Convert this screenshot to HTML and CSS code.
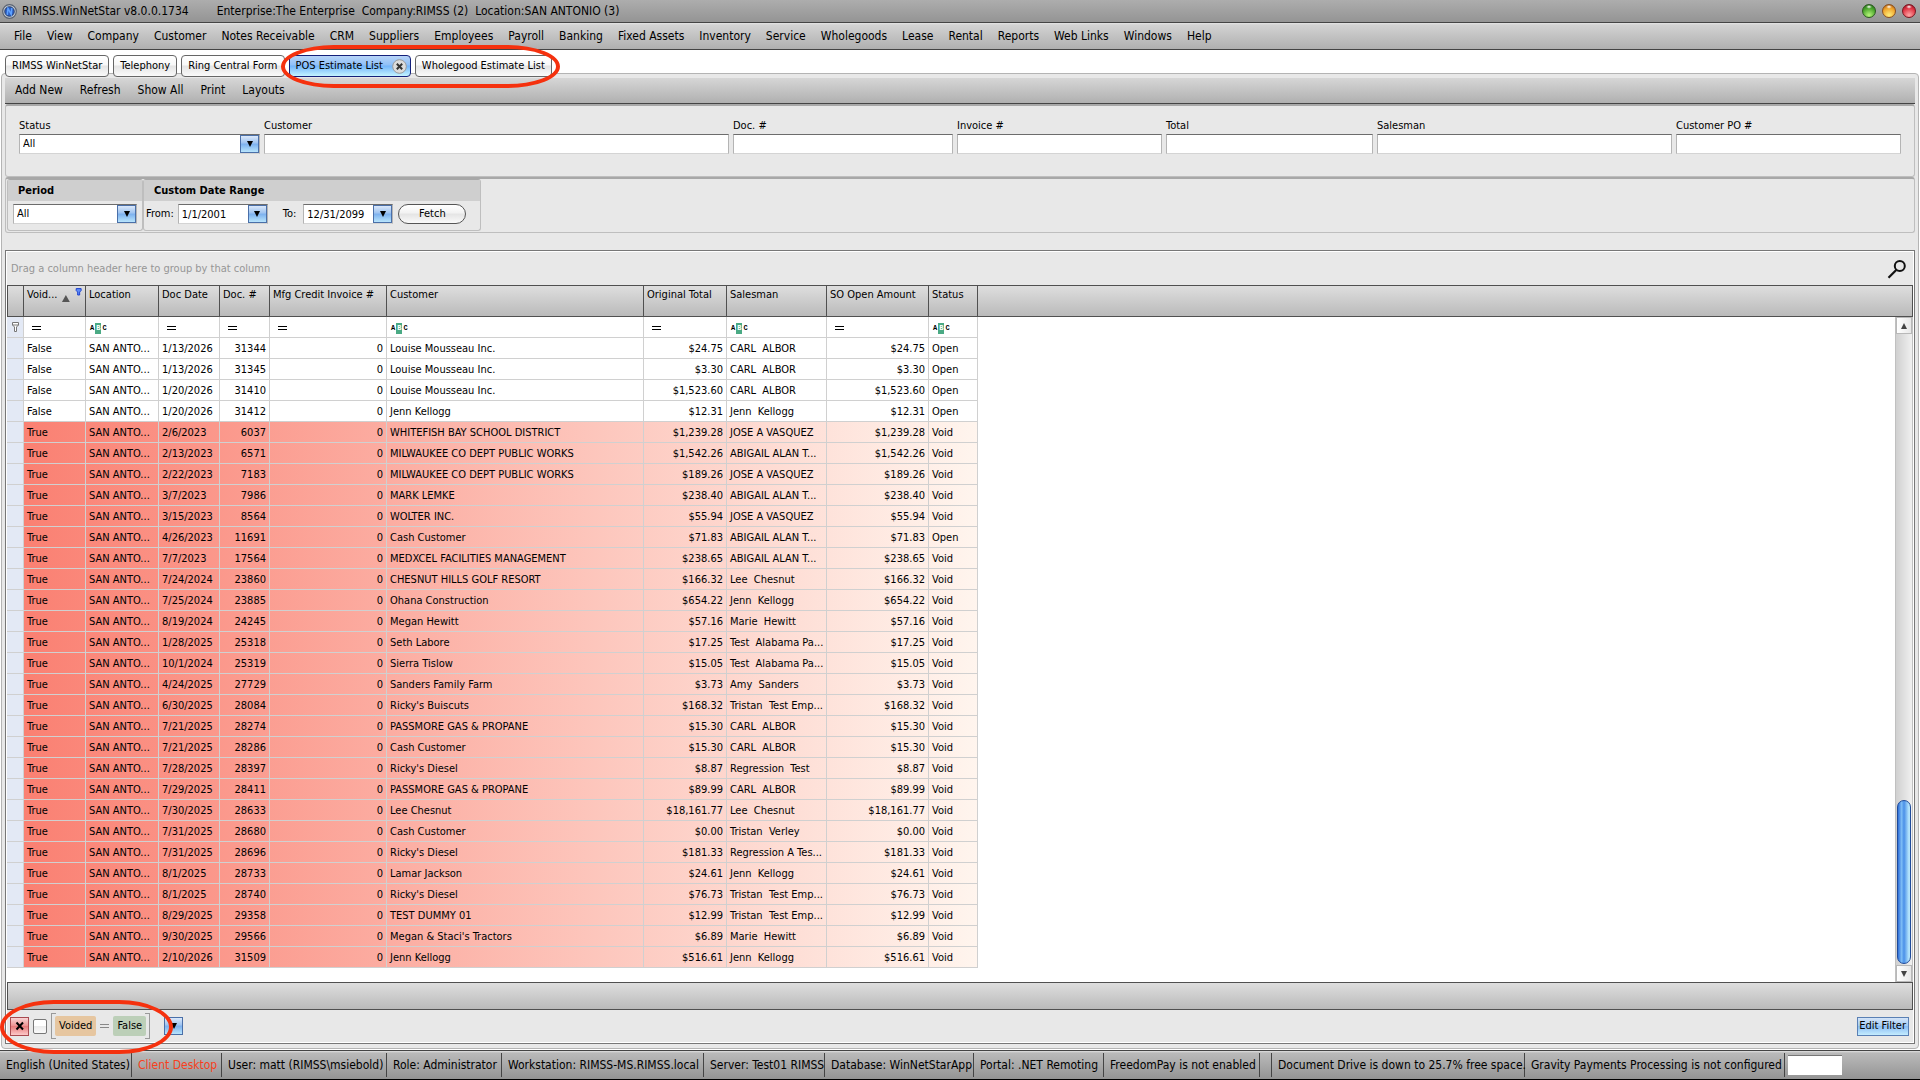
FILE: index.html
```html
<!DOCTYPE html>
<html lang="en">
<head>
<meta charset="utf-8">
<title>RIMSS.WinNetStar</title>
<link rel="stylesheet" href="styles.css">
</head>
<body>
<header class="titlebar">
  <svg class="app-icon" width="15" height="15" viewBox="0 0 15 15" aria-hidden="true">
    <circle cx="7.5" cy="7.5" r="6.8" fill="#c3cbd8" stroke="#5a6270" stroke-width="1.2"/>
    <circle cx="7.5" cy="7.5" r="4.8" fill="#2d5fc4" stroke="#20304e" stroke-width=".8"/>
    <path d="M5.3 10.8 6 4.4 9.2 10.4 9.8 4" fill="none" stroke="#5fa2ff" stroke-width="1.5"/>
  </svg>
  <span class="app-name">RIMSS.WinNetStar v8.0.0.1734</span>
  <span class="app-info">Enterprise:The Enterprise&nbsp; Company:RIMSS (2)&nbsp; Location:SAN ANTONIO (3)</span>
  <div class="window-buttons">
    <button class="orb orb-green" aria-label="Minimize"></button>
    <button class="orb orb-orange" aria-label="Maximize"></button>
    <button class="orb orb-red" aria-label="Close"></button>
  </div>
</header>
<nav class="menubar">
  <a href="#">File</a><a href="#">View</a><a href="#">Company</a><a href="#">Customer</a><a href="#">Notes Receivable</a><a href="#">CRM</a><a href="#">Suppliers</a><a href="#">Employees</a><a href="#">Payroll</a><a href="#">Banking</a><a href="#">Fixed Assets</a><a href="#">Inventory</a><a href="#">Service</a><a href="#">Wholegoods</a><a href="#">Lease</a><a href="#">Rental</a><a href="#">Reports</a><a href="#">Web Links</a><a href="#">Windows</a><a href="#">Help</a>
</nav>
<div class="tabs">
  <button class="tab">RIMSS WinNetStar</button>
  <button class="tab">Telephony</button>
  <button class="tab">Ring Central Form</button>
  <button class="tab tab-active">POS Estimate List
    <svg width="15" height="15" viewBox="0 0 15 15" aria-hidden="true"><circle cx="7.5" cy="7.5" r="6.8" fill="#dcdcdc" stroke="#9a9a9a"/><path d="M4.8 4.8l5.4 5.4M10.2 4.8l-5.4 5.4" stroke="#333" stroke-width="2"/></svg>
  </button>
  <button class="tab">Wholegood Estimate List</button>
</div>
<main class="page">
  <div class="toolbar">
    <button>Add New</button><button>Refresh</button><button>Show All</button><button>Print</button><button>Layouts</button>
  </div>
  <section class="box search-fields">
    <div class="field"><label for="status">Status</label><div class="combo"><select id="status"><option>All</option></select><span class="drop"></span></div></div>
    <div class="field"><label for="customer">Customer</label><input id="customer" type="text"></div>
    <div class="field"><label for="doc">Doc. #</label><input id="doc" type="text"></div>
    <div class="field"><label for="invoice">Invoice #</label><input id="invoice" type="text"></div>
    <div class="field"><label for="total">Total</label><input id="total" type="text"></div>
    <div class="field"><label for="salesman">Salesman</label><input id="salesman" type="text"></div>
    <div class="field"><label for="po">Customer PO #</label><input id="po" type="text"></div>
  </section>
  <section class="box period-row">
    <div class="group group-period">
      <h2 id="period-title">Period</h2>
      <div class="group-body"><div class="combo"><select aria-labelledby="period-title"><option>All</option></select><span class="drop"></span></div></div>
    </div>
    <div class="group group-range">
      <h2>Custom Date Range</h2>
      <div class="group-body">
        <label for="from">From:</label>
        <div class="combo date"><input id="from" type="text" value="1/1/2001"><button class="drop" aria-label="Open calendar"></button></div>
        <label class="to" for="to">To:</label>
        <div class="combo date"><input id="to" type="text" value="12/31/2099"><button class="drop" aria-label="Open calendar"></button></div>
        <button class="fetch">Fetch</button>
      </div>
    </div>
  </section>
  <section class="grid">
    <div class="group-by">
      <span>Drag a column header here to group by that column</span>
      <svg width="20" height="20" viewBox="0 0 20 20" aria-hidden="true"><circle cx="12.8" cy="7" r="5" fill="none" stroke="#111" stroke-width="2"/><path d="M9.2 11 1.5 18.7" stroke="#111" stroke-width="2.2"/></svg>
    </div>
    <div class="grid-body">
      <table>
        <colgroup><col class="c-mark"><col class="c-void"><col class="c-loc"><col class="c-date"><col class="c-doc"><col class="c-mfg"><col class="c-cust"><col class="c-orig"><col class="c-sales"><col class="c-so"><col class="c-status"><col></colgroup>
        <thead>
          <tr class="head"><th></th><th><span class="sorted">Void...<svg width="28" height="16" viewBox="0 0 28 16" aria-hidden="true"><path d="M5 15 9 8l4 7z" fill="#555"/><path d="M19.500 1.500h5v2l-1.500 1.500v3h-2v-3l-1.500-1.500z" fill="#5f8cf5" stroke="#1a3fd0"/></svg></span></th><th>Location</th><th>Doc Date</th><th>Doc. #</th><th>Mfg Credit Invoice #</th><th>Customer</th><th>Original Total</th><th>Salesman</th><th>SO Open Amount</th><th>Status</th><th></th></tr>
        </thead>
        <tbody>
          <tr class="filter"><td><svg class="funnel" width="9" height="12" viewBox="0 0 9 12" aria-hidden="true"><path d="M1.500 1.500h6v2.500l-2 2v4.500h-2v-4.500l-2-2zM1.500 4h6" fill="#fff" stroke="#777"/></svg></td><td><i class="eq"></i></td><td><span class="abc">A<b>B</b>C</span></td><td><i class="eq"></i></td><td><i class="eq"></i></td><td><i class="eq"></i></td><td><span class="abc">A<b>B</b>C</span></td><td><i class="eq"></i></td><td><span class="abc">A<b>B</b>C</span></td><td><i class="eq"></i></td><td><span class="abc">A<b>B</b>C</span></td><td></td></tr>
          <tr><td></td><td>False</td><td>SAN ANTO...</td><td>1/13/2026</td><td>31344</td><td>0</td><td>Louise Mousseau Inc.</td><td>$24.75</td><td>CARL  ALBOR</td><td>$24.75</td><td>Open</td><td></td></tr>
          <tr><td></td><td>False</td><td>SAN ANTO...</td><td>1/13/2026</td><td>31345</td><td>0</td><td>Louise Mousseau Inc.</td><td>$3.30</td><td>CARL  ALBOR</td><td>$3.30</td><td>Open</td><td></td></tr>
          <tr><td></td><td>False</td><td>SAN ANTO...</td><td>1/20/2026</td><td>31410</td><td>0</td><td>Louise Mousseau Inc.</td><td>$1,523.60</td><td>CARL  ALBOR</td><td>$1,523.60</td><td>Open</td><td></td></tr>
          <tr><td></td><td>False</td><td>SAN ANTO...</td><td>1/20/2026</td><td>31412</td><td>0</td><td>Jenn Kellogg</td><td>$12.31</td><td>Jenn  Kellogg</td><td>$12.31</td><td>Open</td><td></td></tr>
          <tr class="void"><td></td><td>True</td><td>SAN ANTO...</td><td>2/6/2023</td><td>6037</td><td>0</td><td>WHITEFISH BAY SCHOOL DISTRICT</td><td>$1,239.28</td><td>JOSE A VASQUEZ</td><td>$1,239.28</td><td>Void</td><td></td></tr>
          <tr class="void"><td></td><td>True</td><td>SAN ANTO...</td><td>2/13/2023</td><td>6571</td><td>0</td><td>MILWAUKEE CO DEPT PUBLIC WORKS</td><td>$1,542.26</td><td>ABIGAIL ALAN T...</td><td>$1,542.26</td><td>Void</td><td></td></tr>
          <tr class="void"><td></td><td>True</td><td>SAN ANTO...</td><td>2/22/2023</td><td>7183</td><td>0</td><td>MILWAUKEE CO DEPT PUBLIC WORKS</td><td>$189.26</td><td>JOSE A VASQUEZ</td><td>$189.26</td><td>Void</td><td></td></tr>
          <tr class="void"><td></td><td>True</td><td>SAN ANTO...</td><td>3/7/2023</td><td>7986</td><td>0</td><td>MARK LEMKE</td><td>$238.40</td><td>ABIGAIL ALAN T...</td><td>$238.40</td><td>Void</td><td></td></tr>
          <tr class="void"><td></td><td>True</td><td>SAN ANTO...</td><td>3/15/2023</td><td>8564</td><td>0</td><td>WOLTER INC.</td><td>$55.94</td><td>JOSE A VASQUEZ</td><td>$55.94</td><td>Void</td><td></td></tr>
          <tr class="void"><td></td><td>True</td><td>SAN ANTO...</td><td>4/26/2023</td><td>11691</td><td>0</td><td>Cash Customer</td><td>$71.83</td><td>ABIGAIL ALAN T...</td><td>$71.83</td><td>Open</td><td></td></tr>
          <tr class="void"><td></td><td>True</td><td>SAN ANTO...</td><td>7/7/2023</td><td>17564</td><td>0</td><td>MEDXCEL FACILITIES MANAGEMENT</td><td>$238.65</td><td>ABIGAIL ALAN T...</td><td>$238.65</td><td>Void</td><td></td></tr>
          <tr class="void"><td></td><td>True</td><td>SAN ANTO...</td><td>7/24/2024</td><td>23860</td><td>0</td><td>CHESNUT HILLS GOLF RESORT</td><td>$166.32</td><td>Lee  Chesnut</td><td>$166.32</td><td>Void</td><td></td></tr>
          <tr class="void"><td></td><td>True</td><td>SAN ANTO...</td><td>7/25/2024</td><td>23885</td><td>0</td><td>Ohana Construction</td><td>$654.22</td><td>Jenn  Kellogg</td><td>$654.22</td><td>Void</td><td></td></tr>
          <tr class="void"><td></td><td>True</td><td>SAN ANTO...</td><td>8/19/2024</td><td>24245</td><td>0</td><td>Megan Hewitt</td><td>$57.16</td><td>Marie  Hewitt</td><td>$57.16</td><td>Void</td><td></td></tr>
          <tr class="void"><td></td><td>True</td><td>SAN ANTO...</td><td>1/28/2025</td><td>25318</td><td>0</td><td>Seth Labore</td><td>$17.25</td><td>Test  Alabama Pa...</td><td>$17.25</td><td>Void</td><td></td></tr>
          <tr class="void"><td></td><td>True</td><td>SAN ANTO...</td><td>10/1/2024</td><td>25319</td><td>0</td><td>Sierra Tislow</td><td>$15.05</td><td>Test  Alabama Pa...</td><td>$15.05</td><td>Void</td><td></td></tr>
          <tr class="void"><td></td><td>True</td><td>SAN ANTO...</td><td>4/24/2025</td><td>27729</td><td>0</td><td>Sanders Family Farm</td><td>$3.73</td><td>Amy  Sanders</td><td>$3.73</td><td>Void</td><td></td></tr>
          <tr class="void"><td></td><td>True</td><td>SAN ANTO...</td><td>6/30/2025</td><td>28084</td><td>0</td><td>Ricky's Buiscuts</td><td>$168.32</td><td>Tristan  Test Emp...</td><td>$168.32</td><td>Void</td><td></td></tr>
          <tr class="void"><td></td><td>True</td><td>SAN ANTO...</td><td>7/21/2025</td><td>28274</td><td>0</td><td>PASSMORE GAS &amp; PROPANE</td><td>$15.30</td><td>CARL  ALBOR</td><td>$15.30</td><td>Void</td><td></td></tr>
          <tr class="void"><td></td><td>True</td><td>SAN ANTO...</td><td>7/21/2025</td><td>28286</td><td>0</td><td>Cash Customer</td><td>$15.30</td><td>CARL  ALBOR</td><td>$15.30</td><td>Void</td><td></td></tr>
          <tr class="void"><td></td><td>True</td><td>SAN ANTO...</td><td>7/28/2025</td><td>28397</td><td>0</td><td>Ricky's Diesel</td><td>$8.87</td><td>Regression  Test</td><td>$8.87</td><td>Void</td><td></td></tr>
          <tr class="void"><td></td><td>True</td><td>SAN ANTO...</td><td>7/29/2025</td><td>28411</td><td>0</td><td>PASSMORE GAS &amp; PROPANE</td><td>$89.99</td><td>CARL  ALBOR</td><td>$89.99</td><td>Void</td><td></td></tr>
          <tr class="void"><td></td><td>True</td><td>SAN ANTO...</td><td>7/30/2025</td><td>28633</td><td>0</td><td>Lee Chesnut</td><td>$18,161.77</td><td>Lee  Chesnut</td><td>$18,161.77</td><td>Void</td><td></td></tr>
          <tr class="void"><td></td><td>True</td><td>SAN ANTO...</td><td>7/31/2025</td><td>28680</td><td>0</td><td>Cash Customer</td><td>$0.00</td><td>Tristan  Verley</td><td>$0.00</td><td>Void</td><td></td></tr>
          <tr class="void"><td></td><td>True</td><td>SAN ANTO...</td><td>7/31/2025</td><td>28696</td><td>0</td><td>Ricky's Diesel</td><td>$181.33</td><td>Regression A Tes...</td><td>$181.33</td><td>Void</td><td></td></tr>
          <tr class="void"><td></td><td>True</td><td>SAN ANTO...</td><td>8/1/2025</td><td>28733</td><td>0</td><td>Lamar Jackson</td><td>$24.61</td><td>Jenn  Kellogg</td><td>$24.61</td><td>Void</td><td></td></tr>
          <tr class="void"><td></td><td>True</td><td>SAN ANTO...</td><td>8/1/2025</td><td>28740</td><td>0</td><td>Ricky's Diesel</td><td>$76.73</td><td>Tristan  Test Emp...</td><td>$76.73</td><td>Void</td><td></td></tr>
          <tr class="void"><td></td><td>True</td><td>SAN ANTO...</td><td>8/29/2025</td><td>29358</td><td>0</td><td>TEST DUMMY 01</td><td>$12.99</td><td>Tristan  Test Emp...</td><td>$12.99</td><td>Void</td><td></td></tr>
          <tr class="void"><td></td><td>True</td><td>SAN ANTO...</td><td>9/30/2025</td><td>29566</td><td>0</td><td>Megan &amp; Staci's Tractors</td><td>$6.89</td><td>Marie  Hewitt</td><td>$6.89</td><td>Void</td><td></td></tr>
          <tr class="void"><td></td><td>True</td><td>SAN ANTO...</td><td>2/10/2026</td><td>31509</td><td>0</td><td>Jenn Kellogg</td><td>$516.61</td><td>Jenn  Kellogg</td><td>$516.61</td><td>Void</td><td></td></tr>
        </tbody>
      </table>
      <div class="scrollbar">
        <button class="scroll-btn scroll-up" aria-label="Scroll up"></button>
        <div class="track"><div class="thumb"></div></div>
        <button class="scroll-btn scroll-down" aria-label="Scroll down"></button>
      </div>
    </div>
    <div class="grid-footer"></div>
    <div class="filter-panel">
      <button class="clear" aria-label="Clear filter"><svg width="10" height="10" viewBox="0 0 10 10" aria-hidden="true"><path d="M1.500 1.500l6.500 7M8 1.500l-6.500 7" stroke="#000" stroke-width="2"/></svg></button>
      <input type="checkbox" aria-label="Enable filter">
      <div class="condition"><span class="chip chip-name">Voided</span><i class="eq eq-gray"></i><span class="chip chip-value">False</span></div>
      <button class="drop" aria-label="Recent filters"></button>
      <button class="edit-filter">Edit Filter</button>
    </div>
  </section>
</main>
<footer class="statusbar">
  <span>English (United States)</span>
  <span class="client">Client Desktop</span>
  <span>User: matt (RIMSS\msiebold)</span>
  <span>Role: Administrator</span>
  <span>Workstation: RIMSS-MS.RIMSS.local</span>
  <span>Server: Test01 RIMSS</span>
  <span>Database: WinNetStarApp</span>
  <span>Portal: .NET Remoting</span>
  <span>FreedomPay is not enabled</span>
  <span></span>
  <span>Document Drive is down to 25.7% free space.</span>
  <span>Gravity Payments Processing is not configured</span>
  <input type="text" aria-label="Command">
</footer>
<div class="marker marker-tabs"></div>
<div class="marker marker-filter"></div>
</body>
</html>
```
FILE: styles.css
```css
* { box-sizing: border-box; }

body {
  margin: 0;
  min-height: 100vh;
  display: flex;
  flex-direction: column;
  position: relative;
  background: #fff;
  color: #000;
  font: 11px/16px "DejaVu Sans Condensed", "DejaVu Sans", sans-serif;
  white-space: nowrap;
}

button, input, select {
  font: inherit;
  color: inherit;
  margin: 0;
  padding: 0;
  border: 0;
  border-radius: 0;
  background: none;
}

/* title bar */
.titlebar {
  display: flex;
  align-items: center;
  height: 23px;
  padding: 0 4px 0 2px;
  background: linear-gradient(#adadad, #949494);
  border-bottom: 1px solid #444;
  font-size: 12px;
}
.app-icon { margin-right: 5px; }
.app-info { margin-left: 28px; }
.window-buttons { display: flex; gap: 6px; margin-left: auto; }
.orb { width: 14px; height: 14px; border-radius: 50%; border: 1px solid #555; }
.orb-green { background: radial-gradient(ellipse 3px 2px at 50% 15%, #fff, transparent), radial-gradient(circle at 50% 85%, #b5f57a, #4aa52c 60%, #1c6012); border-color: #2b5a20; }
.orb-orange { background: radial-gradient(ellipse 3px 2px at 50% 15%, #fff, transparent), radial-gradient(circle at 50% 85%, #ffee7a, #f0a52c 60%, #a04a08); border-color: #8a5020; }
.orb-red { background: radial-gradient(ellipse 3px 2px at 50% 15%, #fff, transparent), radial-gradient(circle at 50% 85%, #ffa5a5, #e03544 60%, #8a0818); border-color: #7a1520; }

/* menu bar */
.menubar {
  display: flex;
  align-items: center;
  gap: 15px;
  height: 27px;
  padding: 0 14px;
  background: linear-gradient(#e4e4e4, #d2d2d2 2px, #b0b0b0);
  border-bottom: 1px solid #444;
  font-size: 12px;
}
.menubar a { color: inherit; text-decoration: none; }

/* document tabs */
.tabs {
  display: flex;
  gap: 4px;
  padding: 5px 5px 0;
  margin-bottom: -4px;
  position: relative;
  z-index: 1;
}
.tab {
  display: flex;
  align-items: center;
  gap: 9px;
  height: 22px;
  padding: 0 6px;
  border: 1px solid #666;
  border-radius: 4px;
  background: linear-gradient(#fff, #f8f8f8 45%, #e4e4e4 50%, #fafafa);
}
.tab-active {
  padding-right: 3px;
  border-color: #14207a;
  background: linear-gradient(#b8d4f8, #8fc0f8 45%, #72b4fa 50%, #c4f4ff);
}

/* page frame */
.page {
  flex: 1;
  display: flex;
  flex-direction: column;
  margin: 0 1px 1px;
  padding: 4px 3px;
  border: 1px solid #b4b4b4;
  border-radius: 4px;
  background: #e8e8e8;
}
.toolbar {
  display: flex;
  gap: 17px;
  height: 26px;
  padding: 0 10px 2px;
  background: linear-gradient(#d6d6d6, #b0b0b0);
  border-bottom: 1px solid #444;
  font-size: 12px;
}

.box {
  border: 1px solid #bebebe;
  border-top: 2px solid #a8a8a8;
  border-radius: 3px;
}

.search-fields {
  display: grid;
  grid-template-columns: 241fr 465fr 220fr 205fr 207fr 295fr 225fr;
  gap: 4px;
  padding: 12px 13px 22px;
}
.field label { display: block; }
.field > input { display: block; width: 100%; }

.field > input, .combo {
  height: 20px;
  background: #fff;
  border: 1px solid #b4b4b4;
  border-top-color: #6c6c6c;
  border-bottom-color: #d4d4d4;
}
.combo { display: flex; }
.combo select, .combo input {
  flex: 1;
  min-width: 0;
  height: 18px;
  padding-left: 3px;
  appearance: none;
  background: none;
}

/* blue drop-down button */
.drop {
  display: flex;
  align-items: center;
  justify-content: center;
  flex: none;
  width: 19px;
  height: 18px;
  border: 1px solid #4a6fa8;
  background: linear-gradient(#dbe8fa, #9cc2f0 45%, #7cb0ee 50%, #b8e4fc);
}
.drop::after {
  content: "";
  border: 3px solid transparent;
  border-top: 6px solid #000;
  border-bottom: 0;
}

.period-row {
  display: flex;
  align-items: flex-start;
  height: 56px;
  padding: 0 1px 1px;
}
.group { height: 52px; border: 1px solid #bebebe; border-top-color: #a8a8a8; border-radius: 3px; }
.group-period { width: 136px; }
.group-range { width: 338px; }
.group h2 { margin: 0; padding: 0 10px; background: #cfcfcf; font-size: 11px; line-height: 21px; }
.group-body { display: flex; align-items: center; padding: 3px 5px 0; }
.group-period .combo { flex: 1; }
.group-range .group-body { padding-left: 2px; }
.date { width: 90px; margin-left: 4px; }
.to { margin: 0 3px 0 15px; }
.fetch {
  width: 68px;
  height: 20px;
  margin-left: 5px;
  border: 1px solid #555;
  border-radius: 10px;
  background: linear-gradient(#fff, #f2f2f2 45%, #e4e4e4 50%, #fafafa);
}

/* data grid */
.grid {
  flex: 1;
  display: flex;
  flex-direction: column;
  margin-top: 17px;
  padding: 1px;
  border: 1px solid #777;
  background: #fff;
}
.group-by {
  display: flex;
  align-items: center;
  justify-content: space-between;
  height: 33px;
  padding: 0 6px 0 4px;
  background: #e8e8e8;
  color: #969696;
}
.grid-body { flex: 1; display: grid; grid-template-columns: 1fr 18px; }
table {
  grid-area: 1 / 1 / 2 / 3;
  align-self: start;
  width: 100%;
  table-layout: fixed;
  border-collapse: separate;
  border-spacing: 0;
}
.c-mark { width: 17px; }
.c-void { width: 62px; }
.c-loc { width: 73px; }
.c-date { width: 61px; }
.c-doc { width: 50px; }
.c-mfg { width: 117px; }
.c-cust { width: 257px; }
.c-orig { width: 83px; }
.c-sales { width: 100px; }
.c-so { width: 102px; }
.c-status { width: 49px; }

th {
  height: 32px;
  padding: 1px 3px;
  overflow: hidden;
  vertical-align: top;
  text-align: left;
  font-weight: normal;
  border: solid #505050;
  border-width: 1px 1px 1px 0;
  background: linear-gradient(#dedede, #bababa);
}
th:first-child { border-left-width: 1px; }
.sorted { display: flex; justify-content: space-between; margin-right: -3px; }

td {
  height: 21px;
  padding: 2px 3px 0;
  overflow: hidden;
  line-height: 18px;
  white-space: pre;
  border: solid #d0d0d0;
  border-width: 0 1px 1px 0;
}
td:first-child { padding: 0; background: #e3e9f5; }
td:last-child { border: 0; }
td:nth-child(5), td:nth-child(6), td:nth-child(8), td:nth-child(10) { text-align: right; }
.filter td { text-align: left; }
.void { background: linear-gradient(90deg, #fa8072, #fff5ee) 17px 0 / 954px 100% no-repeat; }

.funnel { display: block; margin: 0 auto; }
.eq {
  display: inline-block;
  width: 9px;
  height: 4px;
  margin: 0 5px;
  vertical-align: middle;
  border: solid #000;
  border-width: 1px 0;
}
.eq-gray { border-color: #888; margin: 0 4px; }
.abc { display: flex; align-items: center; padding-left: 1px; font: bold 7px/11px "Liberation Mono", monospace; }
.abc b { padding: 0 1px; margin: 0 1px; background: #4aaa84; color: #fff; }

/* vertical scroll bar */
.scrollbar {
  grid-area: 1 / 2 / 2 / 3;
  display: flex;
  flex-direction: column;
  margin-top: 32px;
  border: solid #c0c0c0;
  border-width: 0 1px;
  background: linear-gradient(90deg, #d0d0d0, #f0f0f0);
}
.scroll-btn {
  display: flex;
  align-items: center;
  justify-content: center;
  height: 17px;
  border: 1px solid #b8b8b8;
  background: linear-gradient(90deg, #fff, #e8e8e8);
}
.scroll-btn::after { content: ""; border: 3px solid transparent; }
.scroll-up::after { border-top: 0; border-bottom: 6px solid #444; }
.scroll-down::after { border-bottom: 0; border-top: 6px solid #444; }
.track { flex: 1; display: flex; flex-direction: column; justify-content: flex-end; padding: 0 1px 1px; }
.thumb {
  height: 26%;
  border: 1px solid #1e4a9a;
  border-radius: 7px;
  background: linear-gradient(90deg, #2f6fd8, #7cbcf6 30%, #4a90e8 50%, #b4e4fc 90%);
}

.grid-footer { height: 28px; border: 1px solid #505050; background: linear-gradient(#dedede, #bababa); }

.filter-panel {
  display: flex;
  align-items: center;
  height: 32px;
  padding: 0 4px 0 3px;
  background: #e8e8e8;
}
.clear {
  display: flex;
  align-items: center;
  justify-content: center;
  width: 19px;
  height: 19px;
  border: 1px solid #a84a50;
  background: linear-gradient(#f8d4d4, #ee9494 45%, #e87c7c 50%, #fcc8c8);
}
.filter-panel input {
  appearance: none;
  width: 14px;
  height: 15px;
  margin: 0 4px;
  border: 1px solid #777;
  border-radius: 2px;
  background: linear-gradient(#fff 50%, #ececec 50%, #fafafa);
}
/* square brackets round the condition */
.condition {
  display: flex;
  align-items: center;
  height: 26px;
  padding: 0 3px;
  background:
    linear-gradient(#999, #999) 0 0 / 4px 1px,
    linear-gradient(#999, #999) 0 100% / 4px 1px,
    linear-gradient(#999, #999) 100% 0 / 4px 1px,
    linear-gradient(#999, #999) 100% 100% / 4px 1px;
  background-repeat: no-repeat;
  border: solid #999;
  border-width: 0 1px;
}
.chip { padding: 0 4px; line-height: 20px; border-radius: 2px; }
.chip-name { background: #e6c6a0; }
.chip-value { background: #bccfb8; }
.filter-panel .drop { margin-left: 14px; }
.edit-filter {
  height: 19px;
  padding: 0 2px 0 1px;
  margin-left: auto;
  border: 1px solid #5a80b4;
  background: linear-gradient(#d4e4f8, #a4ccf4 45%, #8cbef4 50%, #c4ecfe);
}

/* status bar */
.statusbar {
  display: grid;
  grid-template-columns: 132px 90px 165px 115px 202px 121px 149px 130px 156px 12px 253px 260px auto;
  justify-content: start;
  align-items: center;
  height: 30px;
  border-top: 1px solid #444;
  border-bottom: 1px solid #000;
  background: linear-gradient(#e0e0e0, #bababa 2px, #949494);
  font-size: 12px;
}
.statusbar span { height: 24px; padding-left: 6px; line-height: 25px; border-right: 1px solid #444; }
.statusbar .client { color: #f8401c; }
.statusbar input { width: 54px; height: 20px; margin-left: 3px; background: #fff; border-top: 1px solid #777; }

/* red call-outs over the window */
.marker { position: absolute; border: 4px solid #f5310e; pointer-events: none; z-index: 2; }
.marker-tabs { left: 281px; top: 45px; width: 279px; height: 43px; border-radius: 54px / 22px; }
.marker-filter { left: 0; bottom: 26px; width: 173px; height: 54px; border-radius: 54px / 27px; }
```
